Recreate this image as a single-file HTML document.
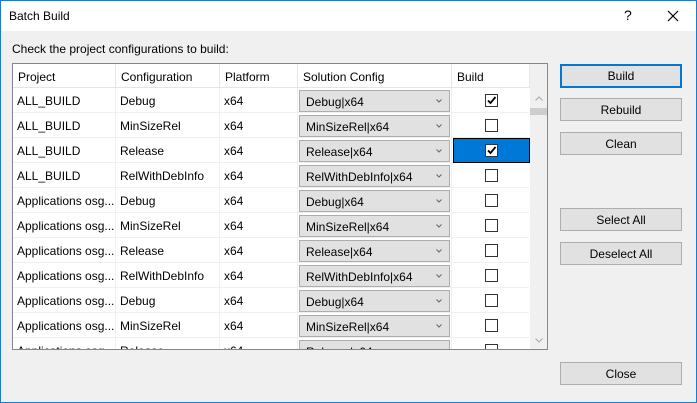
<!DOCTYPE html><html><head><style>
*{margin:0;padding:0;box-sizing:border-box}
body{width:697px;height:403px;background:#f0f0f0;font-family:"Liberation Sans",sans-serif;font-size:12px;color:#000;position:relative;overflow:hidden}
.win{position:absolute;left:0;top:0;width:697px;height:403px;border:1px solid #1a7bd0;border-top:none}
.title{position:absolute;left:0;top:0;width:697px;height:31px;background:#fff;border-top:1px solid #1a7bd0}
.a{position:absolute;white-space:nowrap}
.grid{position:absolute;left:12px;top:63px;width:536px;height:287px;border:1px solid #828790;background:#fff;overflow:hidden}
.hd{position:absolute;top:0;height:24px;border-right:1px solid #e5e5e5;border-bottom:1px solid #e5e5e5;padding:6px 0 0 5px}
.row{position:absolute;left:0;width:516px;height:25px;border-bottom:1px solid #f0f0f0}
.c{position:absolute;top:0;height:25px;border-right:1px solid #f0f0f0;padding:6px 0 0 4px;white-space:nowrap}
.cb{position:absolute;left:286px;top:2px;width:151px;height:22px;background:#e1e1e1;border:1px solid #adadad;padding:4px 0 0 6px}
.cb svg{position:absolute;right:7px;top:8px}
.bx{position:absolute;left:472px;top:6px;width:13px;height:13px;border:1px solid #333;background:#fff}
.sel{position:absolute;left:440px;top:0;width:77px;height:25px;background:#0078d7;border:1px solid #000}
.btn{position:absolute;left:560px;width:122px;height:23px;background:#e1e1e1;border:1px solid #adadad;text-align:center;padding-top:4px}
</style></head><body>
<div class="title"></div>
<div class="win"></div>
<div class="a" style="left:9px;top:9px">Batch Build</div>
<div class="a" style="left:624px;top:7px;font-size:14px">?</div>
<svg class="a" style="left:667px;top:10px" width="12" height="12"><path d="M1 1L11 11M11 1L1 11" stroke="#000" stroke-width="1.2"/></svg>
<div class="a" style="left:12px;top:42px">Check the project configurations to build:</div>
<div class="grid">
<div class="hd" style="left:0;width:103px">Project</div>
<div class="hd" style="left:103px;width:104px">Configuration</div>
<div class="hd" style="left:207px;width:78px">Platform</div>
<div class="hd" style="left:285px;width:154px">Solution Config</div>
<div class="hd" style="left:439px;width:78px">Build</div>
<div style="position:absolute;left:517px;top:0;width:18px;height:287px;background:#f0f0f0"></div>
<div style="position:absolute;left:517px;top:44px;width:17px;height:7px;background:#cdcdcd"></div>
<svg class="a" style="left:522px;top:32px" width="8" height="5"><path d="M0.5 4.5L4 1L7.5 4.5" stroke="#aaa" fill="none"/></svg>
<svg class="a" style="left:522px;top:274px" width="8" height="5"><path d="M0.5 0.5L4 4L7.5 0.5" stroke="#aaa" fill="none"/></svg>
<div id="rows"></div>
</div>
<div class="btn" style="top:64px;height:24px;border:2px solid #0078d7;padding-top:3px">Build</div>
<div class="btn" style="top:98px">Rebuild</div>
<div class="btn" style="top:132px">Clean</div>
<div class="btn" style="top:208px">Select All</div>
<div class="btn" style="top:242px">Deselect All</div>
<div class="btn" style="top:362px">Close</div>
<script>
var d=[["ALL_BUILD","Debug",1],["ALL_BUILD","MinSizeRel",0],["ALL_BUILD","Release",1],["ALL_BUILD","RelWithDebInfo",0],["Applications osg...","Debug",0],["Applications osg...","MinSizeRel",0],["Applications osg...","Release",0],["Applications osg...","RelWithDebInfo",0],["Applications osg...","Debug",0],["Applications osg...","MinSizeRel",0],["Applications osg...","Release",0]];
var h="";
d.forEach(function(r,i){var t=24+25*i;
h+='<div class="row" style="top:'+t+'px"><div class="c" style="left:0;width:103px">'+r[0]+'</div><div class="c" style="left:103px;width:104px">'+r[1]+'</div><div class="c" style="left:207px;width:78px">x64</div><div class="c" style="left:285px;width:154px"></div><div class="cb">'+r[1]+'|x64<svg width="6" height="4"><path d="M0.5 0.5L3 3L5.5 0.5" stroke="#666" fill="none"/></svg></div>'+(i==2?'<div class="sel"></div>':'')+'<div class="bx">'+(r[2]?'<svg width="11" height="11" style="position:absolute;left:0;top:0"><path d="M2 5.5L4.5 8L9.5 2" stroke="#000" stroke-width="1.8" fill="none"/></svg>':'')+'</div></div>';});
document.getElementById("rows").innerHTML=h;
</script>
</body></html>
